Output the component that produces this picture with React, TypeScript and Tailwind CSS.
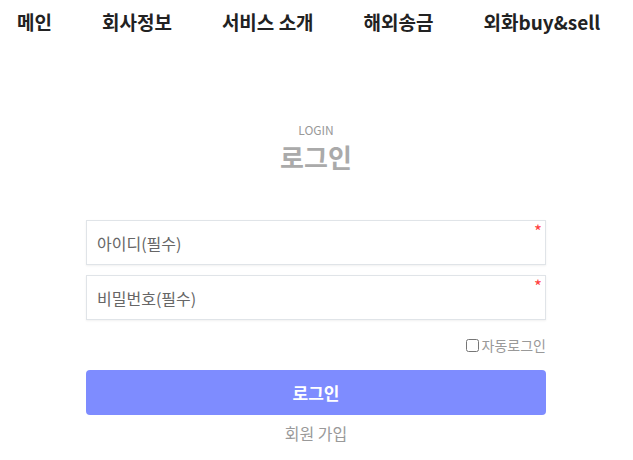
import React from "react";

const font = { fontFamily: '"Noto Sans CJK KR", "Noto Sans", sans-serif' };

function Field({ placeholder, type = "text" }: { placeholder: string; type?: string }) {
  return (
    <div className="relative h-[45px] w-[460px] border border-[#e0e4e8] bg-white shadow-[0_1px_2px_rgba(0,0,0,0.06)]">
      <input
        type={type}
        placeholder={placeholder}
        className="h-full w-full pl-[10px] text-[16px] text-[#555] placeholder:text-[#666] outline-none"
        style={font}
      />
      <span className="absolute right-[3px] top-[1px] text-[17px] leading-[18px] text-[#ff4040]">*</span>
    </div>
  );
}

export default function App() {
  const nav = ["메인", "회사정보", "서비스 소개", "해외송금", "외화buy&sell"];
  return (
    <div className="min-h-[460px] w-[633px] bg-white" style={font}>
      <nav className="flex h-[44px] items-center gap-[50px] pl-[17px]">
        {nav.map((n) => (
          <span key={n} className="text-[19px] font-bold text-[#222]">
            {n}
          </span>
        ))}
      </nav>
      <div className="ml-[86px] flex w-[460px] flex-col items-center">
        <div className="mt-[78px] text-[12px] leading-[16px] text-[#999]">LOGIN</div>
        <div className="mt-[3px] text-[26px] font-bold leading-[32px] text-[#aaa]">로그인</div>
        <div className="mt-[47px] flex flex-col gap-[10px]">
          <Field placeholder="아이디(필수)" />
          <Field placeholder="비밀번호(필수)" type="password" />
        </div>
        <div className="mt-[15px] flex w-[460px] justify-end">
          <label className="flex items-center gap-[3px] text-[14px] leading-[20px] text-[#999]">
            <input type="checkbox" className="h-[13px] w-[13px]" />
            자동로그인
          </label>
        </div>
        <button className="mt-[15px] h-[45px] w-[460px] rounded-[4px] bg-[#7e8cff] text-[17px] font-bold text-white">
          로그인
        </button>
        <div className="mt-[6px] text-[16px] leading-[24px] text-[#999]">회원 가입</div>
      </div>
    </div>
  );
}
